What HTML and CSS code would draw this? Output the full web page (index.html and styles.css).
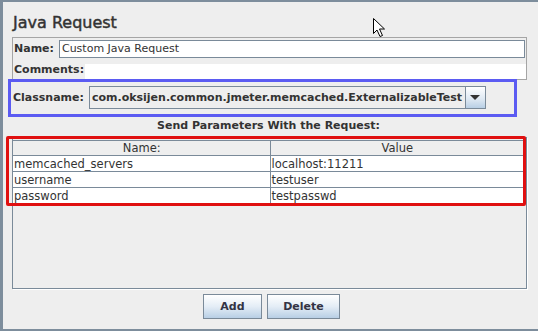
FILE: index.html
```html
<!DOCTYPE html>
<html lang="en">
<head>
    <meta charset="UTF-8">
    <title>Java Request</title>
    <link rel="stylesheet" href="styles.css">
</head>
<body>
    <div class="window">
        <h1 class="title">Java Request</h1>

        <div class="name-panel">
            <div class="row">
                <label class="label">Name:</label>
                <div class="text-field">Custom Java Request</div>
            </div>
            <div class="row comments">
                <label class="label">Comments:</label>
                <div class="text-area"></div>
            </div>
        </div>

        <div class="class-row">
            <label class="label">Classname:</label>
            <div class="combo">
                <span class="combo-text">com.oksijen.common.jmeter.memcached.ExternalizableTest</span>
                <span class="combo-btn"><span class="arrow"></span></span>
            </div>
        </div>

        <div class="section-title">Send Parameters With the Request:</div>

        <div class="scroll-pane">
            <table class="params">
                <thead>
                    <tr><th>Name:</th><th>Value</th></tr>
                </thead>
                <tbody>
                    <tr><td>memcached_servers</td><td>localhost:11211</td></tr>
                    <tr><td>username</td><td>testuser</td></tr>
                    <tr><td>password</td><td>testpasswd</td></tr>
                </tbody>
            </table>
        </div>

        <div class="buttons">
            <button class="btn btn-add">Add</button>
            <button class="btn btn-delete">Delete</button>
        </div>

        <!-- markings drawn over the screenshot -->
        <div class="mark mark-blue"></div>
        <div class="mark mark-red"></div>

        <svg class="cursor" width="14" height="22" viewBox="0 0 14 22">
            <path d="M1.5 1.5 L1.5 16.5 L5 13 L8 19.5 L10.5 18.5 L7.5 12 L12.5 12 Z" fill="#fff" stroke="#000" stroke-width="1" stroke-linejoin="miter"/>
        </svg>
    </div>
</body>
</html>
```

FILE: styles.css
```css
* {
    margin: 0;
    padding: 0;
    box-sizing: border-box;
}

body {
    width: 538px;
    height: 331px;
    overflow: hidden;
    background: #eeeeee;
    font-family: "DejaVu Sans", sans-serif;
    color: #333333;
}

.window {
    position: relative;
    height: 331px;
    border-top: 2px solid #7d8d9c;
    border-bottom: 2px solid #7d8d9c;
    border-left: 3px solid #7d8d9c;
}

.title {
    height: 35px;
    padding: 11px 0 0 10px;
    font-size: 16px;
    font-weight: normal;
    line-height: 20px;
    color: #333333;
    -webkit-text-stroke: 0.45px #333333;
}

.label {
    font-size: 11px;
    font-weight: bold;
    white-space: nowrap;
}

.name-panel {
    margin-left: 9px;
    width: 515px;
    height: 43px;
    border: 1px solid #a5a5a5;
    background: #eeeeee;
}

.row {
    display: flex;
    align-items: center;
    height: 20px;
    padding-left: 1px;
}

.text-field {
    flex: 1;
    height: 18px;
    margin: 1px 1px 0 5px;
    padding-left: 2px;
    border: 1px solid #7a8a99;
    background: #fff;
    font-size: 11px;
    line-height: 16px;
}

.comments {
    align-items: flex-end;
    height: 21px;
}

.comments .label {
    line-height: 18px;
}

.text-area {
    flex: 1;
    height: 15px;
    margin-left: 1px;
    background: #fff;
}

.class-row {
    display: flex;
    align-items: center;
    height: 37px;
    padding: 0 0 2px 10px;
}

.combo {
    display: flex;
    width: 397px;
    height: 23px;
    margin-left: 5px;
    border: 1px solid #7a8a99;
    background: #eeeeee;
}

.combo-text {
    flex: 1;
    padding-left: 2px;
    font-size: 11px;
    font-weight: bold;
    line-height: 21px;
    white-space: nowrap;
    overflow: hidden;
}

.combo-btn {
    display: flex;
    align-items: center;
    justify-content: center;
    width: 20px;
    border-left: 1px solid #7a8a99;
    background: linear-gradient(#ffffff, #dce7f2 60%, #b8cfe5);
}

.arrow {
    width: 0;
    height: 0;
    border-left: 5px solid transparent;
    border-right: 5px solid transparent;
    border-top: 5px solid #333333;
}

.section-title {
    height: 20px;
    font-size: 11px;
    font-weight: bold;
    line-height: 18px;
    text-align: center;
    padding-right: 4px;
}

.scroll-pane {
    margin-left: 9px;
    width: 515px;
    height: 152px;
    padding-top: 2px;
    border: 1px solid #7a8a99;
    box-shadow: 1px 1px 0 #ffffff;
}

.params {
    width: 511px;
    border-collapse: collapse;
    font-size: 11.5px;
    table-layout: fixed;
}

.params th,
.params td {
    height: 16px;
    padding: 0 0 0 1px;
    border: 1px solid #7a8a99;
    line-height: 14px;
    white-space: nowrap;
}

.params th {
    height: 15px;
    font-weight: normal;
    text-align: center;
    background: #eeeeee;
}

.params td {
    background: #ffffff;
}

.params tr > :first-child {
    border-left: none;
    width: 257px;
}

.buttons {
    display: flex;
    justify-content: center;
    gap: 5px;
    padding: 5px 0 0 2px;
}

.btn {
    height: 25px;
    border: 1px solid #7a8a99;
    background: linear-gradient(#ffffff, #e4edf6 50%, #b8cfe5);
    font-family: "DejaVu Sans", sans-serif;
    font-size: 11px;
    font-weight: bold;
    color: #333344;
}

.btn-add {
    width: 59px;
}

.btn-delete {
    width: 73px;
}

.mark {
    position: absolute;
    pointer-events: none;
}

.mark-blue {
    left: 5px;
    top: 77px;
    width: 509px;
    height: 38px;
    border: 3px solid #5b5bf2;
}

.mark-red {
    left: 3px;
    top: 134px;
    width: 520px;
    height: 70px;
    border: 3px solid #e01010;
    border-radius: 2px;
}

.cursor {
    position: absolute;
    left: 369px;
    top: 15px;
}
```
